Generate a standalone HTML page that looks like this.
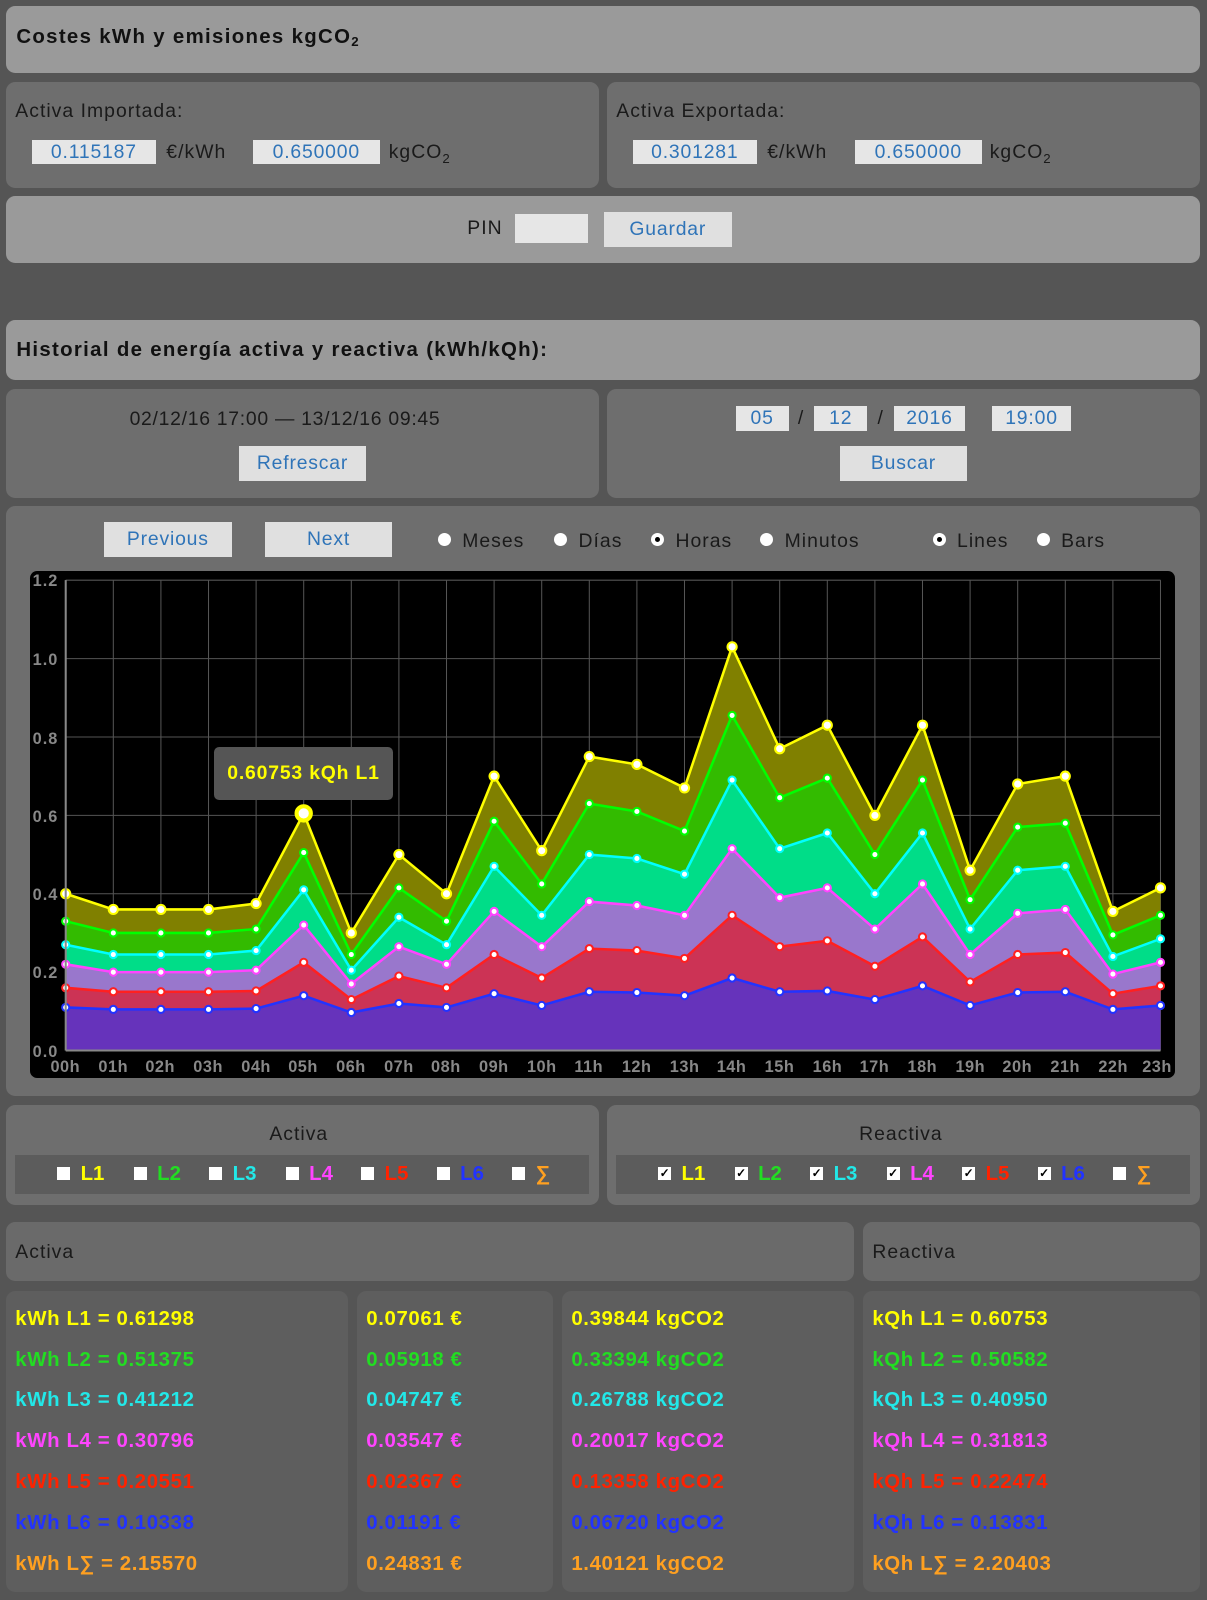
<!DOCTYPE html>
<html><head><meta charset="utf-8"><style>
html,body{margin:0;padding:0;background:#555;}
body{zoom:1.0203;width:1183px;height:1568px;position:relative;font-family:"Liberation Sans",sans-serif;overflow:hidden}
.p{position:absolute;border-radius:9px}
.l{background:#9a9a9a}.m{background:#6e6e6e}.d{background:#5e5e5e}
.t{position:absolute;white-space:nowrap}
.h{font-weight:bold;font-size:20px;color:#111;letter-spacing:1.3px}
.n{font-size:19px;color:#1a1a1a;letter-spacing:1px}
.in{position:absolute;background:#e6e6e6;color:#2f74b8;font-size:19px;letter-spacing:.8px;text-align:center;line-height:24px;height:24px}
.bt{position:absolute;background:#e0e0e0;color:#2f74b8;font-size:19px;letter-spacing:.8px;text-align:center;line-height:34px;height:34px;width:125px}
.r{position:absolute;width:13px;height:13px;border-radius:50%;background:#fff}
.r.on::after{content:"";position:absolute;left:4px;top:4px;width:5px;height:5px;border-radius:50%;background:#000}
.strip{position:absolute;background:#5c5c5c;height:38px}
.cb{position:absolute;width:13px;height:13px;background:#fff;top:12px;font-size:12px;line-height:13px;text-align:center;color:#000;font-weight:bold}
.cl{position:absolute;top:8px;font-size:20px;font-weight:bold}
.row{position:absolute;font-weight:bold;font-size:20px;letter-spacing:.6px;white-space:nowrap}
.yl{position:absolute;color:#888;font-weight:bold;font-size:16px;letter-spacing:1px}
.xl{position:absolute;color:#888;font-weight:bold;font-size:16px;letter-spacing:.5px;top:477px;width:44px;text-align:center}
</style></head><body>
<div class="p l" style="left:6px;top:6px;width:1170px;height:66px"></div>
<div class="t h" style="left:16px;top:25px">Costes kWh y emisiones kgCO<sub style="font-size:13px;vertical-align:-3px">2</sub></div>

<div class="p m" style="left:6px;top:80px;width:581px;height:104px"></div>
<div class="p m" style="left:595px;top:80px;width:581px;height:104px"></div>
<div class="t n" style="left:15px;top:98px">Activa Importada:</div>
<div class="in" style="left:31px;top:137px;width:122px">0.115187</div>
<div class="t n" style="left:163px;top:138px">€/kWh</div>
<div class="in" style="left:248px;top:137px;width:124px">0.650000</div>
<div class="t n" style="left:381px;top:138px">kgCO<sub style="font-size:13px">2</sub></div>
<div class="t n" style="left:604px;top:98px">Activa Exportada:</div>
<div class="in" style="left:620px;top:137px;width:122px">0.301281</div>
<div class="t n" style="left:752px;top:138px">€/kWh</div>
<div class="in" style="left:838px;top:137px;width:124px">0.650000</div>
<div class="t n" style="left:970px;top:138px">kgCO<sub style="font-size:13px">2</sub></div>

<div class="p l" style="left:6px;top:192px;width:1170px;height:66px"></div>
<div class="t n" style="left:458px;top:213px">PIN</div>
<div class="in" style="left:505px;top:210px;width:71px;height:28px"></div>
<div class="bt" style="left:592px;top:208px">Guardar</div>

<div class="p l" style="left:6px;top:314px;width:1170px;height:58px"></div>
<div class="t h" style="left:16px;top:332px">Historial de energía activa y reactiva (kWh/kQh):</div>

<div class="p m" style="left:6px;top:381px;width:581px;height:107px"></div>
<div class="p m" style="left:595px;top:381px;width:581px;height:107px"></div>
<div class="t n" style="left:127px;top:400px;letter-spacing:.7px">02/12/16 17:00 — 13/12/16 09:45</div>
<div class="bt" style="left:234px;top:437px">Refrescar</div>
<div class="in" style="left:721px;top:398px;width:52px">05</div>
<div class="t n" style="left:782px;top:399px">/</div>
<div class="in" style="left:798px;top:398px;width:52px">12</div>
<div class="t n" style="left:860px;top:399px">/</div>
<div class="in" style="left:876px;top:398px;width:70px">2016</div>
<div class="in" style="left:972px;top:398px;width:78px">19:00</div>
<div class="bt" style="left:823px;top:437px">Buscar</div>

<div class="p m" style="left:6px;top:496px;width:1170px;height:578px"></div>
<div class="bt" style="left:102px;top:512px">Previous</div>
<div class="bt" style="left:260px;top:512px;width:124px">Next</div>
<div class="r" style="left:429px;top:522px"></div><div class="t n" style="left:453px;top:519px">Meses</div>
<div class="r" style="left:543px;top:522px"></div><div class="t n" style="left:567px;top:519px">Días</div>
<div class="r on" style="left:638px;top:522px"></div><div class="t n" style="left:662px;top:519px">Horas</div>
<div class="r" style="left:745px;top:522px"></div><div class="t n" style="left:769px;top:519px">Minutos</div>
<div class="r on" style="left:914px;top:522px"></div><div class="t n" style="left:938px;top:519px">Lines</div>
<div class="r" style="left:1016px;top:522px"></div><div class="t n" style="left:1040px;top:519px">Bars</div>

<div style="position:absolute;left:29px;top:560px;width:1123px;height:497px;background:#000;border-radius:7px">
<svg id="ch" width="1123" height="497" style="position:absolute;left:0;top:0"></svg>
<div class="yl" style="left:3px;top:1px">1.2</div>
<div class="yl" style="left:3px;top:78px">1.0</div>
<div class="yl" style="left:3px;top:155px">0.8</div>
<div class="yl" style="left:3px;top:232px">0.6</div>
<div class="yl" style="left:3px;top:308px">0.4</div>
<div class="yl" style="left:3px;top:385px">0.2</div>
<div class="yl" style="left:3px;top:462px">0.0</div>
<div class="xl" style="left:13px">00h</div><div class="xl" style="left:60px">01h</div><div class="xl" style="left:106px">02h</div><div class="xl" style="left:153px">03h</div><div class="xl" style="left:200px">04h</div><div class="xl" style="left:246px">05h</div><div class="xl" style="left:293px">06h</div><div class="xl" style="left:340px">07h</div><div class="xl" style="left:386px">08h</div><div class="xl" style="left:433px">09h</div><div class="xl" style="left:480px">10h</div><div class="xl" style="left:526px">11h</div><div class="xl" style="left:573px">12h</div><div class="xl" style="left:620px">13h</div><div class="xl" style="left:666px">14h</div><div class="xl" style="left:713px">15h</div><div class="xl" style="left:760px">16h</div><div class="xl" style="left:806px">17h</div><div class="xl" style="left:853px">18h</div><div class="xl" style="left:900px">19h</div><div class="xl" style="left:946px">20h</div><div class="xl" style="left:993px">21h</div><div class="xl" style="left:1040px">22h</div><div class="xl" style="left:1083px">23h</div>
<div style="position:absolute;left:181px;top:172px;width:175px;height:52px;background:#555;border-radius:5px;color:#ffff00;font-weight:bold;font-size:19px;letter-spacing:.8px;line-height:52px;text-align:center">0.60753 kQh L1</div>
</div>

<div class="p m" style="left:6px;top:1083px;width:581px;height:98px"></div>
<div class="p m" style="left:595px;top:1083px;width:581px;height:98px"></div>
<div class="t n" style="left:264px;top:1101px">Activa</div>
<div class="t n" style="left:842px;top:1101px">Reactiva</div>
<div class="strip" style="left:15px;top:1132px;width:562px">
<div class="cb" style="left:41px"></div><div class="cl" style="left:64px;color:#ffff00">L1</div>
<div class="cb" style="left:116px"></div><div class="cl" style="left:139px;color:#22dd22">L2</div>
<div class="cb" style="left:190px"></div><div class="cl" style="left:213px;color:#22e8e8">L3</div>
<div class="cb" style="left:265px"></div><div class="cl" style="left:288px;color:#ff44ff">L4</div>
<div class="cb" style="left:339px"></div><div class="cl" style="left:362px;color:#ff2200">L5</div>
<div class="cb" style="left:413px"></div><div class="cl" style="left:436px;color:#2233ff">L6</div>
<div class="cb" style="left:487px"></div><div class="cl" style="left:510px;color:#ffa020">∑</div>
</div>
<div class="strip" style="left:604px;top:1132px;width:562px">
<div class="cb" style="left:41px">✓</div><div class="cl" style="left:64px;color:#ffff00">L1</div>
<div class="cb" style="left:116px">✓</div><div class="cl" style="left:139px;color:#22dd22">L2</div>
<div class="cb" style="left:190px">✓</div><div class="cl" style="left:213px;color:#22e8e8">L3</div>
<div class="cb" style="left:265px">✓</div><div class="cl" style="left:288px;color:#ff44ff">L4</div>
<div class="cb" style="left:339px">✓</div><div class="cl" style="left:362px;color:#ff2200">L5</div>
<div class="cb" style="left:413px">✓</div><div class="cl" style="left:436px;color:#2233ff">L6</div>
<div class="cb" style="left:487px"></div><div class="cl" style="left:510px;color:#ffa020">∑</div>
</div>

<div class="p m" style="left:6px;top:1198px;width:831px;height:58px;background:#6a6a6a"></div>
<div class="p m" style="left:846px;top:1198px;width:330px;height:58px;background:#6a6a6a"></div>
<div class="t n" style="left:15px;top:1216px">Activa</div>
<div class="t n" style="left:855px;top:1216px">Reactiva</div>

<div class="p d" style="left:6px;top:1265px;width:335px;height:295px"></div>
<div class="p d" style="left:350px;top:1265px;width:192px;height:295px"></div>
<div class="p d" style="left:551px;top:1265px;width:286px;height:295px"></div>
<div class="p d" style="left:846px;top:1265px;width:330px;height:295px"></div>

<div class="row" style="left:15px;top:1273px;line-height:40px">
<div style="color:#ffff00">kWh L1 = 0.61298</div><div style="color:#22dd22">kWh L2 = 0.51375</div><div style="color:#22e8e8">kWh L3 = 0.41212</div><div style="color:#ff44ff">kWh L4 = 0.30796</div><div style="color:#ff2200">kWh L5 = 0.20551</div><div style="color:#2233ff">kWh L6 = 0.10338</div><div style="color:#ffa020">kWh L∑ = 2.15570</div></div>
<div class="row" style="left:359px;top:1273px;line-height:40px">
<div style="color:#ffff00">0.07061 €</div><div style="color:#22dd22">0.05918 €</div><div style="color:#22e8e8">0.04747 €</div><div style="color:#ff44ff">0.03547 €</div><div style="color:#ff2200">0.02367 €</div><div style="color:#2233ff">0.01191 €</div><div style="color:#ffa020">0.24831 €</div></div>
<div class="row" style="left:560px;top:1273px;line-height:40px">
<div style="color:#ffff00">0.39844 kgCO2</div><div style="color:#22dd22">0.33394 kgCO2</div><div style="color:#22e8e8">0.26788 kgCO2</div><div style="color:#ff44ff">0.20017 kgCO2</div><div style="color:#ff2200">0.13358 kgCO2</div><div style="color:#2233ff">0.06720 kgCO2</div><div style="color:#ffa020">1.40121 kgCO2</div></div>
<div class="row" style="left:855px;top:1273px;line-height:40px">
<div style="color:#ffff00">kQh L1 = 0.60753</div><div style="color:#22dd22">kQh L2 = 0.50582</div><div style="color:#22e8e8">kQh L3 = 0.40950</div><div style="color:#ff44ff">kQh L4 = 0.31813</div><div style="color:#ff2200">kQh L5 = 0.22474</div><div style="color:#2233ff">kQh L6 = 0.13831</div><div style="color:#ffa020">kQh L∑ = 2.20403</div></div>

<script>
var D=[
[0.40,0.36,0.36,0.36,0.375,0.605,0.30,0.50,0.40,0.70,0.51,0.75,0.73,0.67,1.03,0.77,0.83,0.60,0.83,0.46,0.68,0.70,0.355,0.415],
[0.33,0.30,0.30,0.30,0.31,0.505,0.245,0.415,0.33,0.585,0.425,0.63,0.61,0.56,0.855,0.645,0.695,0.50,0.69,0.385,0.57,0.58,0.295,0.345],
[0.27,0.245,0.245,0.245,0.255,0.41,0.205,0.34,0.27,0.47,0.345,0.50,0.49,0.45,0.69,0.515,0.555,0.40,0.555,0.31,0.46,0.47,0.24,0.285],
[0.22,0.20,0.20,0.20,0.205,0.32,0.17,0.265,0.22,0.355,0.265,0.38,0.37,0.345,0.515,0.39,0.415,0.31,0.425,0.245,0.35,0.36,0.195,0.225],
[0.16,0.15,0.15,0.15,0.152,0.225,0.13,0.19,0.16,0.245,0.185,0.26,0.255,0.235,0.345,0.265,0.28,0.215,0.29,0.175,0.245,0.25,0.145,0.165],
[0.11,0.105,0.105,0.105,0.107,0.14,0.097,0.12,0.11,0.145,0.115,0.15,0.148,0.14,0.185,0.15,0.152,0.13,0.165,0.115,0.148,0.15,0.105,0.115]];
var LC=['#ffff00','#00ff00','#00ffff','#ff44ff','#ff2020','#2233ff'];
var FC=['#808000','#33bb00','#00dd88','#9977cc','#cc3355','#6633bb'];
var L=35,T=9,W=1073,H=461;
function X(i){return L+i*W/23}function Y(v){return T+H-v*H/1.2}
var s='';
for(var i=0;i<24;i++)s+='<line x1="'+X(i)+'" y1="'+T+'" x2="'+X(i)+'" y2="'+(T+H)+'" stroke="#555"/>';
for(var k=0;k<=6;k++)s+='<line x1="'+L+'" y1="'+Y(k*0.2)+'" x2="'+(L+W)+'" y2="'+Y(k*0.2)+'" stroke="#555"/>';
for(var j=0;j<6;j++){var lo=D[j+1],p='';
 for(var i=0;i<24;i++)p+=X(i)+','+Y(D[j][i])+' ';
 for(var i=23;i>=0;i--)p+=X(i)+','+Y(lo?lo[i]:0)+' ';
 s+='<polygon points="'+p+'" fill="'+FC[j]+'"/>';}
for(var j=0;j<6;j++){var p='';for(var i=0;i<24;i++)p+=X(i)+','+Y(D[j][i])+' ';
 s+='<polyline points="'+p+'" fill="none" stroke="'+LC[j]+'" stroke-width="2.5"/>';
 for(var i=0;i<24;i++)s+='<circle cx="'+X(i)+'" cy="'+Y(D[j][i])+'" r="'+(j==0?4.5:3.5)+'" fill="#fff" stroke="'+LC[j]+'" stroke-width="2"/>';}
s+='<circle cx="'+X(5)+'" cy="'+Y(0.605)+'" r="7" fill="#fff" stroke="#ffff00" stroke-width="4"/>';
s+='<line x1="'+L+'" y1="'+T+'" x2="'+L+'" y2="'+(T+H)+'" stroke="#888" stroke-width="2"/><line x1="'+L+'" y1="'+(T+H)+'" x2="'+(L+W)+'" y2="'+(T+H)+'" stroke="#888" stroke-width="2"/>';
document.getElementById('ch').innerHTML=s;
</script>
</body></html>
